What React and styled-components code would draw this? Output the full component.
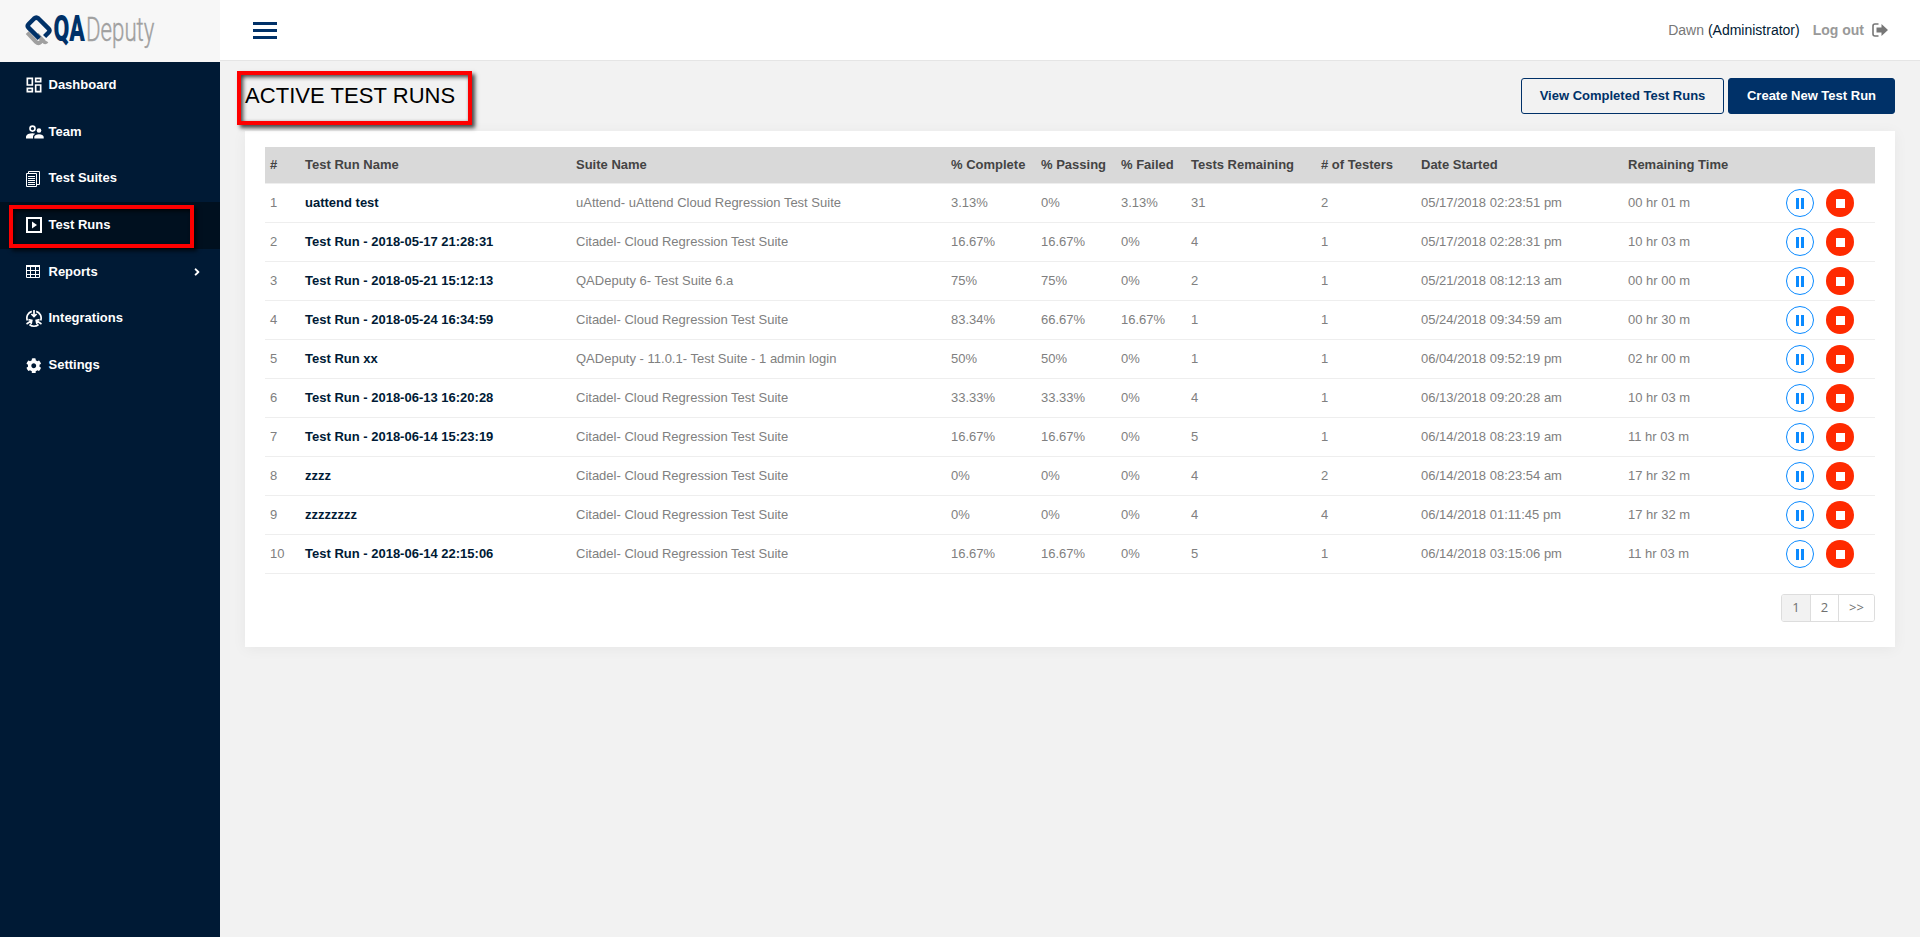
import React from "react";
import styled, { createGlobalStyle } from "styled-components";
import { MdOutlineDashboard } from "react-icons/md";
import { FaCog, FaAngleRight } from "react-icons/fa";

// --- Global Styles ---
const GlobalStyle = createGlobalStyle`
  :root {
    --navy: #001a35;
    --blue: #003168;
    --gray: #808080;
    --line: #eeeeee;
  }

  * {
    box-sizing: border-box;
    margin: 0;
    padding: 0;
  }

  body {
    background: #f2f2f2;
    color: var(--gray);
    font-family: "Liberation Sans", Arial, sans-serif;
    font-size: 13px;
  }
`;

// --- Styled Components ---
const Page = styled.div`
  display: flex;
  height: 937px;
  overflow: hidden;
`;

const Sidebar = styled.aside`
  width: 220px;
  flex: none;
  background: var(--navy);
`;

const LogoBox = styled.div`
  height: 62px;
  background: #f7f7f7;

  svg {
    display: block;
  }
`;

const NavItem = styled.div`
  position: relative;
  display: flex;
  align-items: center;
  height: 46.67px;
  padding: 0 17px 0 26px;
  background: ${(p) => (p.$active ? "#00101f" : "transparent")};
  color: #fff;
  font-weight: 700;

  span {
    flex: 1;
    padding-bottom: 1.4px;
  }
`;

const NavIcon = styled.i`
  display: flex;
  width: 22.5px;
  height: 18px;
  align-items: center;

  svg {
    flex: none;
  }
`;

const Highlight = styled.div`
  position: absolute;
  border: 4px solid #fe0000;
  box-shadow: 3px 3px 4px rgba(0, 0, 0, 0.7),
    inset 2px 2px 4px rgba(0, 0, 0, 0.75);
`;

const NavHighlight = styled(Highlight)`
  left: 9px;
  top: 3px;
  width: 185px;
  height: 43px;
`;

const TitleHighlight = styled(Highlight)`
  left: -8px;
  top: -16px;
  width: 235px;
  height: 54px;
`;

const Content = styled.div`
  flex: 1;
  min-width: 0;
`;

const TopBar = styled.header`
  display: flex;
  align-items: center;
  height: 61px;
  padding: 0 32px 0 33px;
  background: #fff;
  border-bottom: 1px solid #e5e5e5;
  font-size: 14px;
`;

const Burger = styled.div`
  width: 24px;
  height: 17px;
  margin-right: auto;
  display: flex;
  flex-direction: column;
  justify-content: space-between;

  i {
    height: 3px;
    background: var(--blue);
  }
`;

const UserName = styled.div`
  color: #777;
  margin-right: 13px;

  b {
    color: var(--navy);
    font-weight: 400;
  }
`;

const Logout = styled.div`
  display: flex;
  align-items: center;
  gap: 8px;
  color: #999;
  font-weight: 700;
`;

const Main = styled.main`
  padding: 17px 25px 0;
`;

const Heading = styled.div`
  display: flex;
  justify-content: space-between;
  height: 53px;
`;

const Title = styled.h1`
  position: relative;
  height: 26px;
  margin-top: 9px;
  color: #000;
  font-size: 22px;
  line-height: 17px;
  letter-spacing: 0.05px;
  font-weight: 400;
`;

const Actions = styled.div`
  display: flex;
  gap: 4px;
`;

const Button = styled.button`
  width: ${(p) => p.$width}px;
  height: 36px;
  border: 1px solid var(--blue);
  border-radius: 3px;
  background: ${(p) => (p.$primary ? "var(--blue)" : "transparent")};
  color: ${(p) => (p.$primary ? "#fff" : "var(--blue)")};
  font: 700 13px "Liberation Sans", Arial, sans-serif;
  padding-bottom: 2px;
`;

const Card = styled.section`
  height: 516px;
  padding: 16px 20px;
  background: #fff;
  box-shadow: 0 2px 14px rgba(0, 0, 0, 0.05);
`;

const Table = styled.table`
  width: 1610px;
  table-layout: fixed;
  border-collapse: separate;
  border-spacing: 0;

  th,
  td {
    padding: 0 0 2px 5px;
    text-align: left;
    white-space: nowrap;
    border-bottom: 1px solid var(--line);
  }

  th {
    height: 37px;
    background: #d9d9d9;
    background-clip: padding-box;
    color: #444;
  }

  td {
    height: 39px;
  }
`;

const RunName = styled.td`
  color: var(--navy);
  font-weight: 700;
`;

const Controls = styled.div`
  display: flex;
  gap: 12px;
  padding: 1px 0 0 2px;
`;

const Round = styled.div`
  display: flex;
  align-items: center;
  justify-content: center;
  width: 28px;
  height: 28px;
  border-radius: 50%;
`;

const Pause = styled(Round)`
  border: 1px solid #0a8aff;

  i {
    width: 8px;
    height: 11px;
    margin-top: 1px;
    border: solid #0a8aff;
    border-width: 0 3px;
  }
`;

const Stop = styled(Round)`
  background: #ff2a00;

  i {
    width: 9px;
    height: 9px;
    margin: 1px 0 0 1px;
    background: #fff;
  }
`;

const Pager = styled.div`
  display: flex;
  width: 94px;
  height: 28px;
  margin: 20px 0 0 auto;
  border: 1px solid #ddd;
  border-radius: 3px;
  overflow: hidden;
  font-family: "Open Sans", sans-serif;
`;

const PageLink = styled.div`
  width: ${(p) => p.$width}px;
  border-left: ${(p) => (p.$current ? "0" : "1px solid #ddd")};
  background: ${(p) => (p.$current ? "#f2f2f2" : "#fff")};
  color: #707070;
  text-align: center;
  line-height: 25px;
`;

// --- Icons ---
const Logo = () => (
  <svg width="220" height="62">
    <g fill="none" strokeLinejoin="round">
      <path
        d="M27.2 32.6l8.900 9.400q2.300 2.200 4.500 0l2.400-2.600M37 34.500l7.300 7.300q1.300 1 2.300-.6"
        stroke="#a0a0a0"
        strokeWidth="4"
      />
      <path
        d="M39.3 38.400L28.700 27.800q-1.900-1.900 0-3.800L34.200 18.500q2.100-1.900 4.200 0L48.600 28.700q1.900 1.900 0 3.800L44.600 36.500"
        stroke="#003168"
        strokeWidth="4.5"
      />
    </g>
    <g transform="translate(53.5 41.3) scale(.64 1)">
      <text
        textLength="49"
        lengthAdjust="spacingAndGlyphs"
        fill="#003168"
        fontFamily="Roboto"
        fontWeight="900"
        fontSize="36"
      >
        QA
      </text>
    </g>
    <g transform="translate(86 41.3) scale(.67 1)">
      <text
        textLength="102"
        lengthAdjust="spacingAndGlyphs"
        fill="#a0a0a0"
        stroke="#a0a0a0"
        strokeWidth=".4"
        fontFamily="Roboto"
        fontWeight="300"
        fontSize="33"
      >
        Deputy
      </text>
    </g>
  </svg>
);

const TeamIcon = () => (
  <svg width="18" height="14" fill="#fff">
    <circle cx="6.500" cy="3.600" r="2.500" fill="none" stroke="#fff" strokeWidth="1.6" />
    <circle cx="13" cy="5.500" r="2.300" />
    <path d="M0 13.500v-2Q1 8.300 6.500 8.300q1.500 0 2.800.4-2.300 1.200-2.300 3v1.800z" />
    <path d="M8.300 13.500v-1.800q.7-2.500 4.700-2.500t4.700 2.500v1.800z" />
  </svg>
);

const SuitesIcon = () => (
  <svg width="14" height="16" fill="none" stroke="#fff">
    <path d="M.5 2.5h10v13H.5zM2.5 2V.5h11v13H11M2 5.5h7M2 7.5h7M2 9.5h7M2 11.5h7M2 13.5h7" />
  </svg>
);

const RunsIcon = () => (
  <svg width="16" height="16">
    <path d="M1 1h14v14H1z" fill="none" stroke="#fff" strokeWidth="2" />
    <path d="M6 4.5v7L11 8z" fill="#fff" />
  </svg>
);

const ReportsIcon = () => (
  <svg width="14" height="13" fill="none" stroke="#fff">
    <path d="M0 1h14" strokeWidth="2" />
    <path d="M.5 1v11.500h13V1M4.500 1v11M9.500 1v11M0 5.500h14M0 9.500h14" />
  </svg>
);

const IntegrationsIcon = () => (
  <svg width="16" height="17" fill="none" stroke="#fff" strokeWidth="1.7">
    <path d="M5.800 1.400A7 7 0 0 0 1.300 10.500M10.200 1.400A7 7 0 0 1 14.700 10.500M3.500 14.500a7 7 0 0 0 9 0" />
    <path d="M8 0v5.500M5.400 4L8 6.600 10.600 4M.5 14l4.500-3M2.400 9.600l3.400.7-.7 3.500M15.500 14l-4.500-3M13.600 9.600l-3.400.7.7 3.500" />
  </svg>
);

const LogoutIcon = () => (
  <svg width="16" height="14">
    <path
      d="M6.5 1H3Q1 1 1 3v8q0 2 2 2h3.500"
      fill="none"
      stroke="#777"
      strokeWidth="1.6"
    />
    <path d="M4.500 4.500H9.500V1L16 7 9.500 13V9.500H4.500z" fill="#777" />
  </svg>
);

const DashboardIcon = styled(MdOutlineDashboard)`
  margin-left: -2.5px;
`;

// --- Data ---
const navItems = [
  { label: "Dashboard", icon: <DashboardIcon size={20} /> },
  { label: "Team", icon: <TeamIcon /> },
  { label: "Test Suites", icon: <SuitesIcon /> },
  { label: "Test Runs", icon: <RunsIcon />, active: true },
  { label: "Reports", icon: <ReportsIcon />, arrow: true },
  { label: "Integrations", icon: <IntegrationsIcon /> },
  { label: "Settings", icon: <FaCog size={15.5} /> },
];

const columns = [
  ["#", 35],
  ["Test Run Name", 271],
  ["Suite Name", 375],
  ["% Complete", 90],
  ["% Passing", 80],
  ["% Failed", 70],
  ["Tests Remaining", 130],
  ["# of Testers", 100],
  ["Date Started", 207],
  ["Remaining Time", 156],
  ["", 96],
];

const citadel = "Citadel- Cloud Regression Test Suite";

const runs = [
  ["uattend test", "uAttend- uAttend Cloud Regression Test Suite", "3.13%", "0%", "3.13%", 31, 2, "05/17/2018 02:23:51 pm", "00 hr 01 m"],
  ["Test Run - 2018-05-17 21:28:31", citadel, "16.67%", "16.67%", "0%", 4, 1, "05/17/2018 02:28:31 pm", "10 hr 03 m"],
  ["Test Run - 2018-05-21 15:12:13", "QADeputy 6- Test Suite 6.a", "75%", "75%", "0%", 2, 1, "05/21/2018 08:12:13 am", "00 hr 00 m"],
  ["Test Run - 2018-05-24 16:34:59", citadel, "83.34%", "66.67%", "16.67%", 1, 1, "05/24/2018 09:34:59 am", "00 hr 30 m"],
  ["Test Run xx", "QADeputy - 11.0.1- Test Suite - 1 admin login", "50%", "50%", "0%", 1, 1, "06/04/2018 09:52:19 pm", "02 hr 00 m"],
  ["Test Run - 2018-06-13 16:20:28", citadel, "33.33%", "33.33%", "0%", 4, 1, "06/13/2018 09:20:28 am", "10 hr 03 m"],
  ["Test Run - 2018-06-14 15:23:19", citadel, "16.67%", "16.67%", "0%", 5, 1, "06/14/2018 08:23:19 am", "11 hr 03 m"],
  ["zzzz", citadel, "0%", "0%", "0%", 4, 2, "06/14/2018 08:23:54 am", "17 hr 32 m"],
  ["zzzzzzzz", citadel, "0%", "0%", "0%", 4, 4, "06/14/2018 01:11:45 pm", "17 hr 32 m"],
  ["Test Run - 2018-06-14 22:15:06", citadel, "16.67%", "16.67%", "0%", 5, 1, "06/14/2018 03:15:06 pm", "11 hr 03 m"],
];

const App = () => {
  return (
    <>
      <GlobalStyle />
      <Page>
        <Sidebar>
          <LogoBox>
            <Logo />
          </LogoBox>
          {navItems.map((item) => (
            <NavItem key={item.label} $active={item.active}>
              <NavIcon>{item.icon}</NavIcon>
              <span>{item.label}</span>
              {item.arrow && <FaAngleRight size={12} />}
              {item.active && <NavHighlight />}
            </NavItem>
          ))}
        </Sidebar>

        <Content>
          <TopBar>
            <Burger>
              <i />
              <i />
              <i />
            </Burger>
            <UserName>
              Dawn <b>(Administrator)</b>
            </UserName>
            <Logout>
              Log out <LogoutIcon />
            </Logout>
          </TopBar>

          <Main>
            <Heading>
              <Title>
                ACTIVE TEST RUNS
                <TitleHighlight />
              </Title>
              <Actions>
                <Button $width={203}>View Completed Test Runs</Button>
                <Button $width={167} $primary>
                  Create New Test Run
                </Button>
              </Actions>
            </Heading>

            <Card>
              <Table>
                <colgroup>
                  {columns.map(([label, width]) => (
                    <col key={label} width={width} />
                  ))}
                </colgroup>
                <thead>
                  <tr>
                    {columns.map(([label]) => (
                      <th key={label}>{label}</th>
                    ))}
                  </tr>
                </thead>
                <tbody>
                  {runs.map(([name, ...cells], i) => (
                    <tr key={i}>
                      <td>{i + 1}</td>
                      <RunName>{name}</RunName>
                      {cells.map((cell, j) => (
                        <td key={j}>{cell}</td>
                      ))}
                      <td>
                        <Controls>
                          <Pause>
                            <i />
                          </Pause>
                          <Stop>
                            <i />
                          </Stop>
                        </Controls>
                      </td>
                    </tr>
                  ))}
                </tbody>
              </Table>
              <Pager>
                <PageLink $width={28} $current>
                  1
                </PageLink>
                <PageLink $width={28}>2</PageLink>
                <PageLink $width={36}>&gt;&gt;</PageLink>
              </Pager>
            </Card>
          </Main>
        </Content>
      </Page>
    </>
  );
};

export default App;
